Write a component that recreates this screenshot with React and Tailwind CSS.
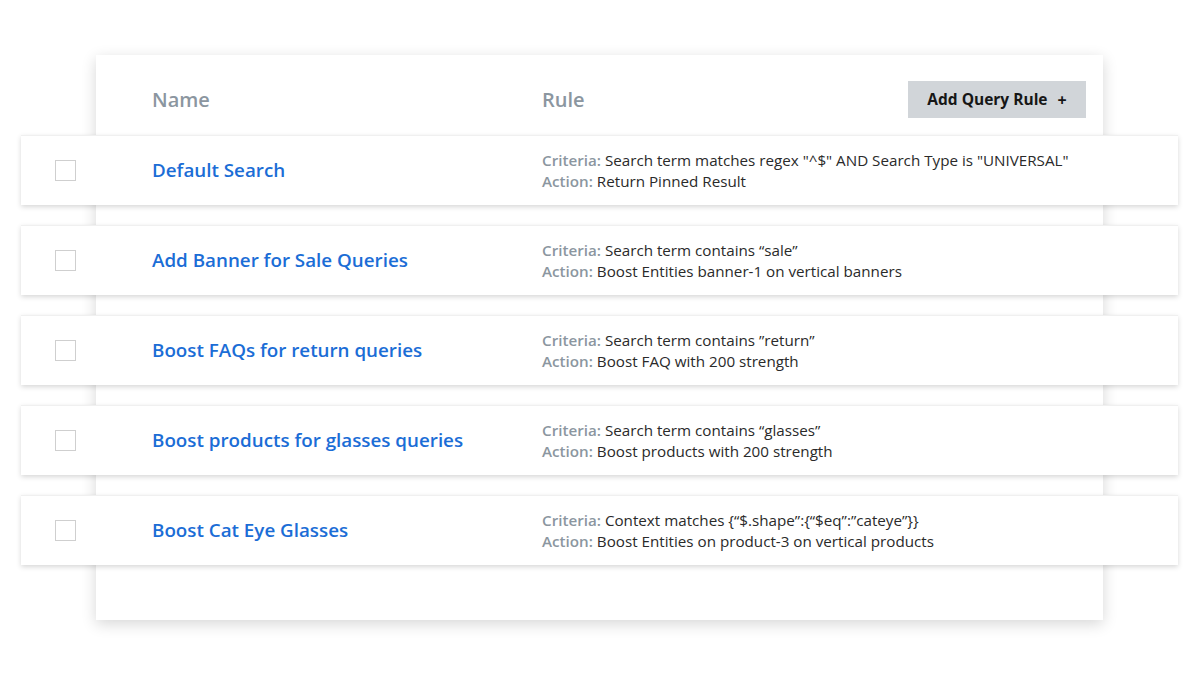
import React from "react";

const rows = [
  {
    name: "Default Search",
    criteria: 'Search term matches regex "^$" AND Search Type is "UNIVERSAL"',
    action: "Return Pinned Result",
  },
  {
    name: "Add Banner for Sale Queries",
    criteria: "Search term contains “sale”",
    action: "Boost Entities banner-1 on vertical banners",
  },
  {
    name: "Boost FAQs for return queries",
    criteria: "Search term contains ”return”",
    action: "Boost FAQ with 200 strength",
  },
  {
    name: "Boost products for glasses queries",
    criteria: "Search term contains “glasses”",
    action: "Boost products with 200 strength",
  },
  {
    name: "Boost Cat Eye Glasses",
    criteria: 'Context matches {“$.shape”:{“$eq”:”cateye”}}',
    action: "Boost Entities on product-3 on vertical products",
  },
];

export default function App() {
  return (
    <div
      className="w-[1200px] h-[675px] bg-white overflow-hidden pt-[55px]"
      style={{ fontFamily: "'Open Sans', 'Noto Sans', sans-serif" }}
    >
      <div className="ml-[96px] w-[1007px] bg-white shadow-[0_4px_14px_rgba(0,0,0,0.16)] pb-[55px]">
        <div className="h-[80px] pt-[10px] flex items-center relative">
          <div className="ml-[56px] w-[390px] text-[20px] font-semibold text-[#8b96a0]">Name</div>
          <div className="text-[20px] font-semibold text-[#8b96a0]">Rule</div>
          <button className="ml-auto mr-[17px] mt-[-2px] w-[178px] h-[37px] bg-[#d1d5d9] pt-[2px] text-[15.5px] font-bold text-[#161616] flex items-center justify-center gap-[10px]">
            <span>Add Query Rule</span>
            <span className="text-[16px]">+</span>
          </button>
        </div>
        <div className="flex flex-col gap-[20px] -mx-[75px]">
          {rows.map((r) => (
            <div
              key={r.name}
              className="h-[70px] bg-white flex items-center border-t border-[#f0f0f0] shadow-[0_2px_5px_rgba(0,0,0,0.16)]"
            >
              <div className="ml-[34px] w-[21px] h-[21px] border border-[#cfcfcf] bg-white shrink-0" />
              <div className="ml-[76px] w-[390px] text-[18.8px] font-semibold text-[#1b6dd6]">
                {r.name}
              </div>
              <div className="text-[15.2px] leading-[21px] text-[#2a2a2a]">
                <div>
                  <span className="font-semibold text-[#8b96a0]">Criteria:</span> {r.criteria}
                </div>
                <div>
                  <span className="font-semibold text-[#8b96a0]">Action:</span> {r.action}
                </div>
              </div>
            </div>
          ))}
        </div>
      </div>
    </div>
  );
}
